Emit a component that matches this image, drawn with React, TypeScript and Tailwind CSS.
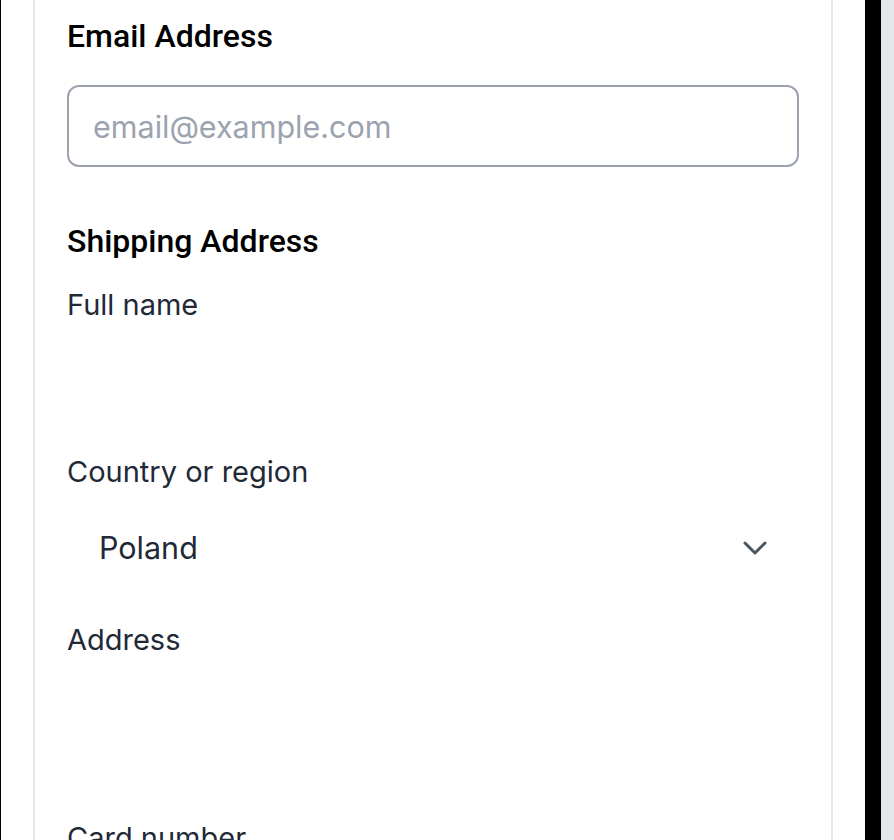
export default function App() {
  return (
    <div className="w-[894px] h-[840px] overflow-hidden flex bg-white">
      <div className="w-px bg-black shrink-0" />
      <div className="w-[32px] shrink-0" />
      {/* checkout card */}
      <div className="w-[800px] shrink-0 border-x-2 border-[#e5e7eb] px-[32px] pt-[16px]">
        <h2 className="text-[32px] leading-[40px] font-medium text-black font-['Roboto',sans-serif]">
          Email Address
        </h2>
        <input
          type="email"
          placeholder="email@example.com"
          className="mt-[29px] w-full h-[82px] rounded-[12px] border-2 border-[#9ca3af] px-[24px] text-[30.5px] text-gray-800 placeholder:text-[#9ca3af] font-['Inter',sans-serif] outline-none"
        />

        <h2 className="mt-[54px] text-[32px] leading-[40px] font-medium text-black font-['Roboto',sans-serif]">
          Shipping Address
        </h2>
        <p className="mt-[24px] text-[29px] leading-[40px] text-[#1f2937] font-['Inter',sans-serif]">Full name</p>
        <div className="h-[127px]" />

        <p className="text-[29px] leading-[40px] text-[#1f2937] font-['Inter',sans-serif]">Country or region</p>
        <div className="mt-[16px] h-[80px] flex items-center justify-between pl-[32px] pr-[32px]">
          <span className="text-[30.5px] text-[#1f2937] font-['Inter',sans-serif]">Poland</span>
          <svg width="24" height="14" viewBox="0 0 24 14" fill="none" stroke="#4b5563" strokeWidth="3" strokeLinecap="round" strokeLinejoin="round">
            <path d="M2 2l10 10L22 2" />
          </svg>
        </div>

        <p className="mt-[32px] text-[29px] leading-[40px] text-[#1f2937] font-['Inter',sans-serif]">Address</p>
        <div className="h-[158px]" />

        <p className="text-[29px] leading-[40px] text-[#1f2937] font-['Inter',sans-serif]">Card number</p>
      </div>
      <div className="w-[32px] shrink-0" />
      <div className="w-[16px] bg-black shrink-0" />
      <div className="flex-1 bg-[#e5e7eb]" />
    </div>
  );
}
